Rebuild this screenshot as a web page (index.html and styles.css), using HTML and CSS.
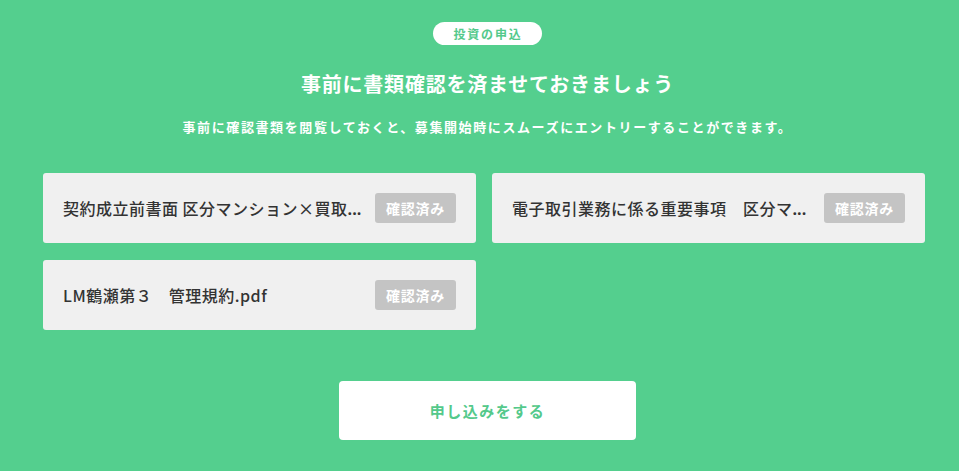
FILE: index.html
```html
<!DOCTYPE html>
<html lang="ja">
<head>
<meta charset="utf-8">
<title>投資の申込</title>
<link rel="stylesheet" href="styles.css">
</head>
<body>
<main class="page">
  <span class="badge">投資の申込</span>
  <h1 class="title">事前に書類確認を済ませておきましょう</h1>
  <p class="lead">事前に確認書類を閲覧しておくと、募集開始時にスムーズにエントリーすることができます。</p>
  <div class="docs">
    <div class="doc">
      <span class="doc-name">契約成立前書面 区分マンション×買取<span class="dots">...</span></span>
      <span class="doc-status">確認済み</span>
    </div>
    <div class="doc">
      <span class="doc-name">電子取引業務に係る重要事項　区分マ<span class="dots">...</span></span>
      <span class="doc-status">確認済み</span>
    </div>
    <div class="doc">
      <span class="doc-name">LM鶴瀬第３　管理規約.pdf</span>
      <span class="doc-status">確認済み</span>
    </div>
  </div>
  <button class="apply" type="button">申し込みをする</button>
</main>
</body>
</html>
```

FILE: styles.css
```css
html, body {
  margin: 0;
  padding: 0;
  background: #54cf8e;
}
body {
  font-family: "Noto Sans CJK JP", "Noto Sans", sans-serif;
  height: 471px;
  overflow: hidden;
}
.page {
  display: flex;
  flex-direction: column;
  align-items: center;
  padding: 22px 0 0 16px;
}
.badge {
  display: block;
  height: 23px;
  line-height: 23px;
  padding: 0 19px 0 20px;
  background: #fff;
  border-radius: 12px;
  color: #54c98b;
  font-size: 12px;
  font-weight: 700;
  letter-spacing: 0.15em;
}
.title {
  margin: 25px 0 0;
  line-height: 28px;
  color: #fff;
  font-size: 20px;
  font-weight: 700;
  letter-spacing: 0.8px;
}
.lead {
  margin: 19px 0 0;
  line-height: 20px;
  color: #fff;
  font-size: 13px;
  font-weight: 700;
  letter-spacing: 1.6px;
}
.docs {
  align-self: stretch;
  display: grid;
  grid-template-columns: 1fr 1fr;
  column-gap: 16px;
  row-gap: 17px;
  margin: 36px 34px 0 27px;
}
.doc {
  display: flex;
  align-items: center;
  gap: 10px;
  height: 70px;
  padding: 0 20px;
  background: #f0f0f0;
  border-radius: 3px;
  min-width: 0;
}
.doc-name {
  flex: 1;
  min-width: 0;
  white-space: nowrap;
  overflow: hidden;
  color: #333;
  font-size: 16px;
  font-weight: 500;
  letter-spacing: 0.5px;
}
.dots {
  font-family: "Open Sans", "Noto Sans", sans-serif;
  font-weight: 700;
  letter-spacing: 0;
}
.doc-status {
  flex: none;
  width: 81px;
  height: 30px;
  line-height: 30px;
  text-align: center;
  background: #c4c4c4;
  border-radius: 3px;
  color: #fff;
  font-size: 14px;
  font-weight: 700;
  letter-spacing: 0.05em;
}
.apply {
  margin-top: 51px;
  width: 297px;
  height: 59px;
  border: none;
  border-radius: 4px;
  background: #fff;
  color: #54c98b;
  font-family: inherit;
  font-size: 15px;
  font-weight: 700;
  letter-spacing: 0.1em;
}
```
